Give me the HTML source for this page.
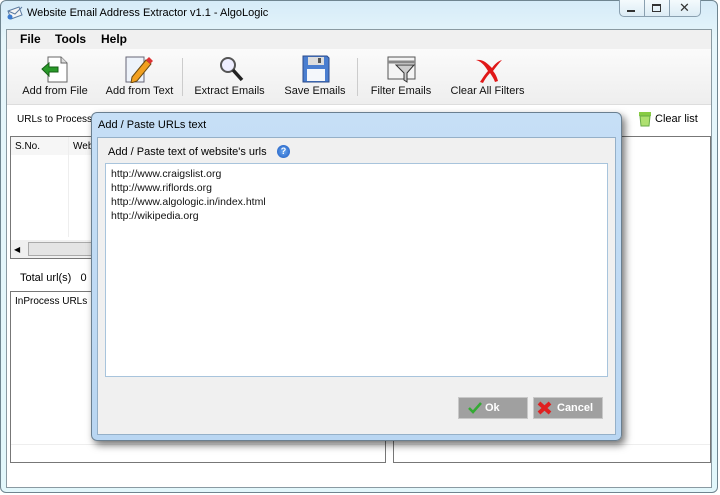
<!DOCTYPE html>
<html><head><style>
*{margin:0;padding:0;box-sizing:border-box}
body{width:720px;height:495px;overflow:hidden;font-family:"Liberation Sans",sans-serif;font-size:11px;background:#fff;position:relative}
.a{position:absolute}
.tb{font-size:11px;color:#111;text-align:center}
</style></head><body>
<div class="a" style="left:0;top:0;width:718px;height:493px;background:linear-gradient(#d6ebf8,#e6f6fb 40px,#e2f7fb);border:1px solid #6f8590;border-radius:6px"></div>
<div class="a" style="left:6px;top:29px;width:706px;height:459px;background:#fff;border:1px solid #8a9aa2"></div>
<svg class="a" style="left:7px;top:6px" width="16" height="14"><path d="M1 5l11-4 3 8-11 4z" fill="#f4f4f4" stroke="#5a7aa0"/><path d="M1 5l7 3 7-7" fill="none" stroke="#5a7aa0"/><circle cx="3" cy="11" r="2.5" fill="#3a7ad0"/></svg>
<div class="a" style="left:27px;top:7px;font-size:11px;color:#000">Website Email Address Extractor v1.1 - AlgoLogic</div>
<div class="a" style="left:619px;top:0;width:82px;height:17px;border:1px solid #8aa0b0;border-top:none;border-radius:0 0 5px 5px;background:linear-gradient(#f4fafd,#dcecf5)"></div>
<div class="a" style="left:644px;top:0;width:1px;height:17px;background:#8aa0b0"></div>
<div class="a" style="left:669px;top:0;width:1px;height:17px;background:#8aa0b0"></div>
<div class="a" style="left:627px;top:10px;width:8px;height:2px;background:#333"></div>
<div class="a" style="left:652px;top:4px;width:9px;height:8px;border:1px solid #333;border-top-width:2px"></div>
<div class="a" style="left:679px;top:0px;font-size:13px;color:#333">✕</div>
<div class="a" style="left:7px;top:30px;width:704px;height:19px;background:#f0f0f0"></div>
<div class="a" style="left:20px;top:32px;font-size:12px;font-weight:bold">File</div>
<div class="a" style="left:55px;top:32px;font-size:12px;font-weight:bold">Tools</div>
<div class="a" style="left:101px;top:32px;font-size:12px;font-weight:bold">Help</div>
<div class="a" style="left:7px;top:49px;width:704px;height:56px;background:linear-gradient(#fbfbfb,#eeeeee);border-bottom:1px solid #ddd"></div>
<svg class="a" style="left:40px;top:55px" width="30" height="28"><path d="M8 2h13l6 6v19H8z" fill="#fff" stroke="#666"/><path d="M21 2v6h6" fill="#ddd" stroke="#666"/><path d="M2 14l7-6v4h9v5H9v4z" fill="#2a9a2a" stroke="#176017"/></svg>
<div class="a tb" style="left:20px;top:85px;width:70px">Add from File</div>
<svg class="a" style="left:122px;top:55px" width="32" height="28"><path d="M4 2h18v25H4z" fill="#eef3fa" stroke="#667"/><path d="M10 22l14-17 5 4-14 17-6 2z" fill="#f2a020" stroke="#6a4a10"/><path d="M24 5l3-3 4 4-3 3z" fill="#d33"/></svg>
<div class="a tb" style="left:102px;top:85px;width:75px">Add from Text</div>
<div class="a" style="left:182px;top:58px;width:1px;height:38px;background:#ccc"></div>
<svg class="a" style="left:217px;top:55px" width="30" height="30"><circle cx="11" cy="10" r="7" fill="#eef" stroke="#555" stroke-width="2"/><path d="M16 15l9 10" stroke="#222" stroke-width="3.5"/></svg>
<div class="a tb" style="left:192px;top:85px;width:75px">Extract Emails</div>
<svg class="a" style="left:302px;top:55px" width="28" height="28"><path d="M1 1h24l2 2v24H1z" fill="#4a7ed0" stroke="#2a4a8a"/><rect x="6" y="2" width="16" height="8" fill="#ddd"/><rect x="16" y="3" width="3" height="5" fill="#555"/><rect x="5" y="14" width="18" height="12" fill="#f4f7fb"/></svg>
<div class="a tb" style="left:280px;top:85px;width:70px">Save Emails</div>
<div class="a" style="left:357px;top:58px;width:1px;height:38px;background:#ccc"></div>
<svg class="a" style="left:387px;top:56px" width="30" height="28"><rect x="1" y="1" width="27" height="22" fill="#f4f4f4" stroke="#555"/><path d="M1 6h27" stroke="#888" stroke-width="3"/><path d="M9 9h18l-7 8v9l-3-2v-7z" fill="#ccc" stroke="#333"/></svg>
<div class="a tb" style="left:362px;top:85px;width:78px">Filter Emails</div>
<svg class="a" style="left:473px;top:55px" width="30" height="28"><path d="M3 5c7 2 10 8 12 11-3 3-6 8-8 11l3 1c2-4 5-8 7-10 2 3 4 6 5 9l3-1c-1-4-3-8-5-10 3-4 6-8 9-11-4 1-8 5-10 8C14 8 10 4 3 5z" fill="#e01818"/></svg>
<div class="a tb" style="left:445px;top:85px;width:85px">Clear All Filters</div>
<div class="a" style="left:17px;top:114px;font-size:10px">URLs to Process</div>
<svg class="a" style="left:638px;top:111px" width="14" height="16"><rect x="1" y="1" width="12" height="4" fill="#8c4"/><path d="M2 5h10l-1 10H3z" fill="#aee070" stroke="#6a4"/></svg>
<div class="a" style="left:655px;top:113px;font-size:11px">Clear list</div>
<div class="a" style="left:10px;top:136px;width:90px;height:123px;border:1px solid #777;background:#fff"></div>
<div class="a" style="left:11px;top:137px;width:88px;height:18px;background:#f6f6f6"></div>
<div class="a" style="left:15px;top:141px;font-size:10px">S.No.</div>
<div class="a" style="left:73px;top:141px;font-size:10px">Web</div>
<div class="a" style="left:68px;top:137px;width:1px;height:100px;background:#eee"></div>
<div class="a" style="left:11px;top:240px;width:88px;height:18px;background:#f0f0f0"></div>
<div class="a" style="left:14px;top:245px;font-size:8px">◀</div>
<div class="a" style="left:28px;top:242px;width:70px;height:14px;background:#e4e4e4;border:1px solid #aaa"></div>
<div class="a" style="left:20px;top:272px;font-size:11px">Total url(s) &nbsp;&nbsp;0</div>
<div class="a" style="left:10px;top:291px;width:376px;height:172px;border:1px solid #777"></div>
<div class="a" style="left:15px;top:296px;font-size:10px">InProcess URLs</div>
<div class="a" style="left:393px;top:136px;width:318px;height:327px;border:1px solid #777"></div>
<div class="a" style="left:11px;top:444px;width:374px;height:1px;background:#eee"></div>
<div class="a" style="left:394px;top:444px;width:316px;height:1px;background:#eee"></div>
<div class="a" style="left:91px;top:112px;width:531px;height:329px;border-radius:6px;background:linear-gradient(#c6dff6,#b9d6f2);border:1px solid #6a7f90;box-shadow:3px 4px 8px rgba(0,0,0,.55)"></div>
<div class="a" style="left:98px;top:119px;font-size:11px">Add / Paste URLs text</div>
<div class="a" style="left:97px;top:137px;width:519px;height:298px;background:#f0f0f0;border:1px solid #95b0c8"></div>
<div class="a" style="left:108px;top:146px;font-size:11px">Add / Paste text of website's urls</div>
<div class="a" style="left:277px;top:145px;width:13px;height:13px;border-radius:50%;background:radial-gradient(#6aa8f0,#1a58c0);color:#fff;font-size:9px;font-weight:bold;text-align:center;line-height:13px">?</div>
<div class="a" style="left:105px;top:163px;width:503px;height:214px;background:#fff;border:1px solid #a8c4dc;padding:3px 5px;font-size:10.5px;line-height:14px;color:#111">http://www.craigslist.org<br>http://www.riflords.org<br>http://www.algologic.in/index.html<br>http://wikipedia.org</div>
<div class="a" style="left:458px;top:397px;width:70px;height:22px;background:#a0a0a0;border:1px solid #c8c8c8;color:#fff;font-weight:bold;font-size:11px;line-height:20px;padding-left:26px">Ok</div>
<svg class="a" style="left:468px;top:402px" width="14" height="12"><path d="M1 6l4 4 8-9" fill="none" stroke="#3a3" stroke-width="2.5"/></svg>
<div class="a" style="left:533px;top:397px;width:70px;height:22px;background:#a0a0a0;border:1px solid #c8c8c8;color:#fff;font-weight:bold;font-size:11px;line-height:20px;padding-left:23px">Cancel</div>
<svg class="a" style="left:537px;top:401px" width="15" height="14"><path d="M2 2l11 10M13 2L2 12" stroke="#e02020" stroke-width="4"/></svg>
</body></html>
